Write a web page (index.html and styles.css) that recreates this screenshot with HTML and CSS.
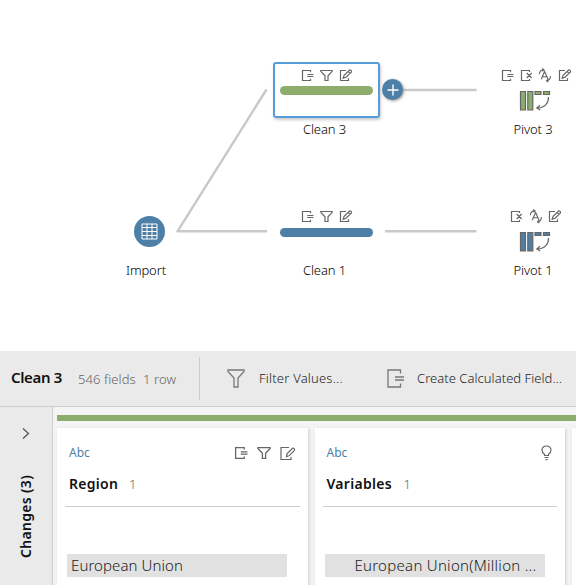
FILE: index.html
```html
<!DOCTYPE html>
<html lang="en">
<head>
<meta charset="utf-8">
<title>Flow</title>
<link rel="stylesheet" href="styles.css">
</head>
<body>
<svg class="defs" width="0" height="0" aria-hidden="true">
  <symbol id="calc" viewBox="0 0 13 13"><path d="M9.5 3.300V1.500H1.500v10h8v-1.800M6.300 5.500H12.500M6.300 7.500H12.500"/></symbol>
  <symbol id="filter" viewBox="0 0 13 13"><path d="M.8 1.500h11.400v.8L8 6.800V11.500H5V6.800L.8 2.300z"/></symbol>
  <symbol id="edit" viewBox="0 0 14 13"><path d="M7 1.500H1.500v10h8V9.300M4.200 9.300l.9-2.900 5.500-5.300c1-.5 2.300.8 1.900 1.800L7 8.300zM9.200 2.600l2 1.900"/></symbol>
  <symbol id="remove" viewBox="0 0 13 13"><path d="M9.500 3V1.500h-8v10h8V10M6.700 4l5 5M11.700 4l-5 5"/></symbol>
  <symbol id="rename" viewBox="0 0 14 14"><path d="M2.900 11 6.600 2.600l3.700 8.400M4.100 8.300h5M1 5.500C.8 3 2.500.9 5.800.9M4-.7l1.900 1.600L4.300 2.600M12.700 7.500c.2 3-1 4.800-3.900 5.100M10.500 10.900l-1.900 1.700 2.100 1.300"/></symbol>
  <symbol id="pivot" viewBox="0 0 32 22">
    <path fill="currentColor" d="M1.500 1.500h5v18.500h-5zM8.800 1.500h5v18.500h-5zM16 1.500h6v3h-6zM24.500 1.500h6v3h-6z"/>
    <path d="M29.500 7c.3 6-3.500 10.600-11 11M21 15.300l-3.200 2.700 3.400 2"/>
  </symbol>
</svg>

<main class="canvas">
  <svg class="links" width="576" height="350">
    <path d="M266.500 89.500 177.500 231.300H267M385 231.300h91.500M392 90h84.500"/>
  </svg>

  <div class="node import">
    <span class="disc"><svg width="17" height="17" viewBox="0 0 17 17"><path d="M1 1h15v15H1zM1 4.500h15M1 8.500h15M1 12.500h15M6 1v15M11 1v15"/></svg></span>
    <span class="name">Import</span>
  </div>

  <div class="node step clean3 selected">
    <div class="box"><div class="icons"><svg class="icon i13"><use href="#calc"/></svg><svg class="icon i13"><use href="#filter"/></svg><svg class="icon i14"><use href="#edit"/></svg></div><div class="bar"></div></div>
    <span class="name">Clean 3</span>
  </div>
  <span class="add"><svg width="12" height="12" viewBox="0 0 12 12"><path d="M6 .5v11M.5 6h11"/></svg></span>

  <div class="node step clean1">
    <div class="box"><div class="icons"><svg class="icon i13"><use href="#calc"/></svg><svg class="icon i13"><use href="#filter"/></svg><svg class="icon i14"><use href="#edit"/></svg></div><div class="bar"></div></div>
    <span class="name">Clean 1</span>
  </div>

  <div class="node pivot pivot3">
    <div class="icons"><svg class="icon i13"><use href="#calc"/></svg><svg class="icon i13"><use href="#remove"/></svg><svg class="icon i14"><use href="#rename"/></svg><svg class="icon i14"><use href="#edit"/></svg></div>
    <svg class="icon table"><use href="#pivot"/></svg>
    <span class="name">Pivot 3</span>
  </div>

  <div class="node pivot pivot1">
    <div class="icons"><svg class="icon i13"><use href="#remove"/></svg><svg class="icon i14"><use href="#rename"/></svg><svg class="icon i14"><use href="#edit"/></svg></div>
    <svg class="icon table"><use href="#pivot"/></svg>
    <span class="name">Pivot 1</span>
  </div>
</main>

<header class="toolbar">
  <h1 class="title">Clean 3</h1>
  <span class="fields">546 fields</span>
  <span class="rows">1 row</span>
  <span class="divider"></span>
  <div class="action filter-action"><svg class="large" width="18" height="19" viewBox="0 0 18 19"><path d="M1 1h16v1.500l-6 6.500v9H7V9L1 2.500z"/></svg><span>Filter Values...</span></div>
  <div class="action calc-action"><svg class="large" width="18" height="19" viewBox="0 0 18 19"><path d="M13.500 4.500V1H1v17h12.500v-3.500M8 8h9M8 11h9"/></svg><span>Create Calculated Field...</span></div>
</header>

<section class="panel">
  <aside class="changes">
    <svg class="chevron" width="8" height="13" viewBox="0 0 8 13"><path d="m1 1.500 5.500 5L1 11.500"/></svg>
    <span class="vertical">Changes (3)</span>
  </aside>
  <div class="profile">
    <div class="stripe"></div>
    <div class="cards">
      <article class="card">
        <div class="type"><span>Abc</span><div class="tools"><svg class="icon big"><use href="#calc"/></svg><svg class="icon big"><use href="#filter"/></svg><svg class="icon wide" viewBox="0 0 16 15"><path d="M9 1.500H1v12h10V11M6.500 10.500l.5-2.700 5.500-5.500c1.200-.5 2.500.8 2 2L9 9.800zM6 11l2-1"/></svg></div></div>
        <h2 class="heading"><span class="label region">Region</span><span class="count">1</span></h2>
        <div class="value"><span>European Union</span></div>
      </article>
      <article class="card">
        <div class="type"><span>Abc</span><div class="tools"><svg class="icon bulb" viewBox="0 0 11 16"><path d="M3.500 10.500V9.300C2.200 8.400 1 7.100 1 5.100 1 2.500 3 1 5.500 1S10 2.500 10 5.100c0 2-1.200 3.300-2.500 4.200v1.200zM3.500 12.500h4M4.500 14.700h2"/></svg></div></div>
        <h2 class="heading"><span class="label variables">Variables</span><span class="count">1</span></h2>
        <div class="value end"><span>European Union(Million ...</span></div>
      </article>
      <article class="card"></article>
    </div>
  </div>
</section>
</body>
</html>
```

FILE: styles.css
```css
* { box-sizing: border-box; }
body {
  margin: 0;
  width: 576px;
  height: 585px;
  overflow: hidden;
  background: #fff;
  color: #000;
  font: 300 13px/18px "Noto Sans", "Open Sans", sans-serif;
}
.defs { position: absolute; }
svg { display: block; fill: none; flex: none; }
h1, h2 { margin: 0; }

.canvas { position: relative; height: 351px; }
.links { position: absolute; left: 0; top: 0; stroke: #c9c9c9; stroke-width: 2.5; stroke-linejoin: round; }
.icon { stroke: #666; stroke-width: 1.2; overflow: visible; }
.icons .icon { stroke-width: 1.2; stroke: #666; }
symbol { overflow: visible; }
.i13 { width: 13px; height: 13px; }
.i14 { width: 14px; height: 13px; }

.node { position: absolute; display: flex; flex-direction: column; align-items: center; }
.name { white-space: nowrap; font-size: 13px; font-weight: 350; line-height: 18px; letter-spacing: -0.1px; }
.icons { display: flex; }

.import { left: 118px; top: 216px; width: 56px; }
.disc { display: grid; place-items: center; width: 31px; height: 31px; border-radius: 50%; background: #4e7fa6; margin-left: 6px; }
.disc svg { stroke: #fff; stroke-width: 1; }
.import .name { margin-top: 14px; }

.step { width: 107px; left: 273px; }
.clean3 { top: 62px; }
.clean1 { top: 203px; }
.box { display: flex; flex-direction: column; align-items: center; width: 107px; height: 56px; padding-top: 7px; border-radius: 3px; }
.selected .box { background: #fff; box-shadow: inset 0 0 0 2px #579cda, 1px 2px 3px #ccc; }
.step .icons { gap: 6px; margin-left: 1px; }
.bar { width: 93px; height: 9px; margin-top: 4px; border-radius: 5px; background: #4e7fa6; }
.selected .bar { background: #8cad6b; }
.clean1 .bar { margin-top: 5px; }
.step .name { margin-top: 2px; margin-right: 4px; }
.add { position: absolute; left: 382px; top: 79px; width: 21px; height: 21px; display: grid; place-items: center; border-radius: 50%; background: #4e7fa6; box-shadow: 1px 1px 3px #999; }
.add svg { stroke: #fff; stroke-width: 1.4; }

.pivot { left: 494px; width: 78px; color: #4e7fa6; }
.pivot3 { top: 69px; color: #8cad6b; }
.pivot1 { top: 210px; }
.pivot .icons { gap: 5.500px; align-self: flex-end; margin-right: 0.5px; }
.pivot1 .icons { margin-right: 10px; }
.table { width: 32px; height: 22px; margin: 8px 0 0 4px; }
.pivot .name { margin-top: 8px; color: #000; }

.toolbar { display: flex; align-items: center; height: 56px; padding-left: 11px; background: #eaeaea; border-bottom: 1px solid #ccc; white-space: nowrap; }
.title { width: 67px; padding-bottom: 3px; font-size: 15px; line-height: 20px; font-weight: 650; letter-spacing: -0.35px; color: #111; }
.fields { width: 65px; color: #666; padding-top: 1px; letter-spacing: 0.1px; }
.rows { width: 56px; color: #666; padding-top: 1px; letter-spacing: 0.1px; }
.divider { width: 1px; height: 43px; background: #ccc; }
.action { display: flex; align-items: center; color: #222; }
.action span { padding-bottom: 2px; }
.filter-action { width: 160px; margin-left: 27px; gap: 14px; letter-spacing: 0.2px; }
.calc-action { gap: 12px; letter-spacing: 0.04px; }
.large { stroke: #777; stroke-width: 1.3; }

.panel { display: flex; height: 178px; background: #f4f4f4; }
.changes { width: 53px; display: flex; flex-direction: column; align-items: center; padding-top: 20px; background: #eaeaea; border-right: 1px solid #ccc; }
.chevron { stroke: #555; stroke-width: 1.3; }
.vertical { writing-mode: vertical-rl; transform: rotate(180deg); margin-top: 35px; font-size: 14px; line-height: 20px; font-weight: 600; letter-spacing: 0.3px; color: #111; white-space: nowrap; }
.profile { flex: 1; min-width: 0; padding: 8px 0 0 4px; overflow: hidden; }
.stripe { height: 6px; background: #8cad6b; }
.cards { display: flex; gap: 7px; margin-top: 7px; }
.card { flex: 0 0 250.500px; height: 165px; padding: 12px 8px 0 8px; background: #fff; box-shadow: 1px 1px 3px #ccc; }
.type { display: flex; justify-content: space-between; height: 24px; padding: 0 4px; color: #4e7fa6; font-size: 12px; font-weight: 400; line-height: 26px; }
.tools { display: flex; align-items: center; gap: 9px; padding-top: 2px; }
.big { width: 14px; height: 14px; }
.wide { width: 16px; height: 15px; }
.bulb { width: 11px; height: 16px; margin-right: 1px; }
.heading { display: flex; height: 43px; padding: 10px 4px 0; border-bottom: 1px solid #ccc; font-size: 14px; line-height: 20px; font-weight: 600; letter-spacing: 0.3px; color: #111; }
.region { width: 60px; }
.variables { width: 77px; }
.count { font-size: 13px; font-weight: 300; color: #666; }
.value { width: 220px; height: 23px; margin: 47px 0 0 2px; padding: 0 4px; background: #e1e1e1; color: #222; font-size: 15px; line-height: 23px; letter-spacing: 0.08px; white-space: nowrap; }
.end { display: flex; justify-content: flex-end; padding-right: 8px; letter-spacing: 0.28px; }
```
